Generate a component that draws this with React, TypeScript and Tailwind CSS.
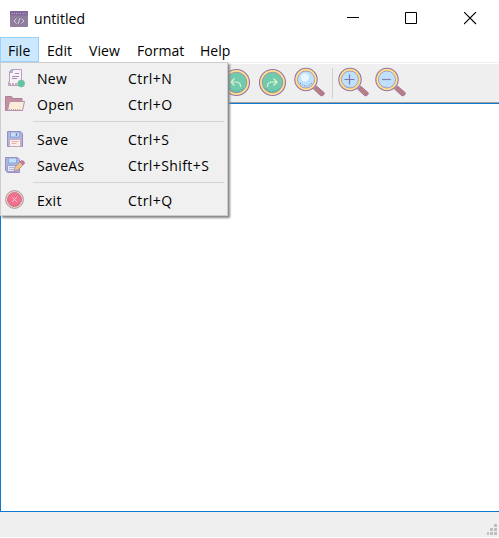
import React from 'react';

const ink = '#a58ac0';

function AppIcon() {
  return (
    <svg width="18" height="16" viewBox="0 0 18 16">
      <rect width="18" height="16" rx="1" fill="#8f7f9c" />
      <rect width="18" height="4.5" rx="1" fill="#83689c" />
      <path d="M2 2.500h9M13 2.500h3" stroke="#b9a2cc" strokeDasharray="1 1" />
      <path d="M6.500 7.500L4 10l2.500 2.500M11.500 7.500L14 10l-2.500 2.500M10 7l-2 6" fill="none" stroke="#d6cbdc" />
    </svg>
  );
}

function NewIcon() {
  return (
    <svg width="20" height="20" viewBox="0 0 20 20">
      <path d="M6.500 1.500H16.500V14a3 3 0 0 1-3 3.500H3.500V14H4.500V3.500z" fill="#f8f2f4" stroke="#b9a0c6" />
      <path d="M4.500 4.500h3v-3z" fill="#a9c4f0" stroke="#9c94cc" strokeWidth=".7" />
      <path d="M10 5.500h4M7 8.500h7M7 10.500h5" stroke={ink} strokeWidth="1.200" />
      <path d="M4 16h11" stroke="#c8a9b9" strokeDasharray="2 1" strokeWidth="2" />
      <circle cx="16.200" cy="15.500" r="3.500" fill="#5ac8a2" stroke="#8fb1ab" strokeWidth=".6" />
    </svg>
  );
}

function OpenIcon() {
  return (
    <svg width="20" height="20" viewBox="0 0 20 20">
      <path d="M.5 2.500h6l1.500 2h9v12H.5z" fill="#c58f9f" stroke="#ad819f" />
      <path d="M4.500 7.500h15l-2 9H2.500z" fill="#faecd9" stroke="#b392aa" />
      <path d="M4 15.500h12" stroke="#c7a4ac" strokeDasharray="1 1" />
    </svg>
  );
}

function SaveIcon() {
  return (
    <svg width="20" height="20" viewBox="0 0 20 20">
      <path d="M2.500 2.500h13l2 2v13h-15z" fill="#a7b7e3" stroke="#a18abf" />
      <path d="M5.500 3h9v5h-9z" fill="#c7def7" stroke="#8e9aca" strokeWidth=".8" />
      <path d="M11.500 4v3" stroke="#7d89bd" strokeWidth="1.500" />
      <path d="M4.500 10.500h11v7h-11z" fill="#fdeee5" stroke="#c6a2b8" strokeWidth=".8" />
      <path d="M6.500 12.500h7M6.500 14.500h5" stroke="#e4a9a4" strokeWidth=".9" />
    </svg>
  );
}

function SaveAsIcon() {
  return (
    <svg width="20" height="20" viewBox="0 0 20 20">
      <path d="M.5 2.500h12l2 2v13h-12l-2-2z" fill="#a7b7e3" stroke="#a18abf" />
      <path d="M3.500 3h8v5h-8z" fill="#bfe0f8" stroke="#8e9aca" strokeWidth=".8" />
      <path d="M2.500 10.500h10v6h-10z" fill="#e3eafc" stroke="#9b91bf" strokeWidth=".8" />
      <path d="M4 12.500h6M4 14.500h5" stroke="#a5a9cc" strokeWidth=".8" />
      <path d="M9 16l1-4 5-5 3 3-5 5z" fill="#edc28b" stroke="#a987a2" strokeWidth=".8" />
      <path d="M15 7l1.500-1.500q3 0 3 3L18 10z" fill="#d07b91" stroke="#a77597" strokeWidth=".8" />
    </svg>
  );
}

function ExitIcon() {
  return (
    <svg width="20" height="20" viewBox="0 0 20 20">
      <circle cx="9.500" cy="9.500" r="8.900" fill="#f2dba6" stroke="#a984b2" strokeWidth=".9" />
      <circle cx="9.500" cy="9.500" r="7" fill="#f26f8d" stroke="#b4759d" strokeWidth=".8" />
      <path d="M7 7l5 5M12 7l-5 5" stroke="#f8c3cf" />
      <path d="M6 14.500q3.500 2 7 0" fill="none" stroke="#c8638e" strokeDasharray="1 1" />
    </svg>
  );
}

function ArrowIcon({ redo = false }: { redo?: boolean }) {
  return (
    <svg width="30" height="30" viewBox="0 0 30 30">
      <circle cx="15.500" cy="14.500" r="13" fill="#ffe08c" stroke="#9474aa" strokeWidth="1.100" />
      <circle cx="15.500" cy="14.500" r="10.300" fill="#70cbae" stroke="#9888a5" strokeWidth=".8" />
      <path d="M8.500 20.500q7 6 14 0" fill="none" stroke="#4a9f99" strokeDasharray="1 1.500" strokeWidth="1.300" />
      <g transform={redo ? undefined : 'translate(30 0) scale(-1 1)'}>
        <path d="M10.500 19v-1q0-4 5-4h4M16.500 10.500l3.500 3.500-3.500 3.500" fill="none" stroke="#e2f0cf" strokeWidth="1.200" />
      </g>
    </svg>
  );
}

function LensIcon({ kind }: { kind: 'find' | 'plus' | 'minus' }) {
  return (
    <svg width="32" height="32" viewBox="0 0 32 32">
      <path d="M19.500 22l3-3 7.500 6.500q1 1-.5 2.500t-3 .5z" fill="#ba7d84" stroke="#96749c" strokeWidth=".9" />
      <circle cx="12" cy="12.500" r="11.200" fill="#ffe088" stroke="#9474aa" strokeWidth="1.100" />
      <circle cx="12" cy="12.500" r="8.500" fill="#bfe0fb" stroke="#a08cb4" strokeWidth=".8" />
      {kind === 'find' && <circle cx="11" cy="10.500" r="4" fill="#e9f6ff" />}
      {kind === 'find' && <path d="M6 16q6 6 12 0" fill="none" stroke="#7792cf" strokeDasharray="1 1.500" strokeWidth="1.300" />}
      {kind !== 'find' && <path d="M6 18q3 3 7 2" fill="none" stroke="#89a4d7" strokeDasharray="1 1" />}
      {kind === 'plus' && <path d="M6.500 12.500h10M11.500 7.500v10" stroke="#7c78ae" strokeWidth="1.200" />}
      {kind === 'minus' && <path d="M7 12.500h9" stroke="#8580b5" strokeWidth="1.200" />}
    </svg>
  );
}

function Item({ icon, label, keys }: { icon: React.ReactNode; label: string; keys: string }) {
  return (
    <div className="flex h-[26px] items-center pl-1">
      <div className="w-8 shrink-0 pb-[2px]">{icon}</div>
      <div className="w-[91px] shrink-0 tracking-[0.25px]">{label}</div>
      <div className="tracking-[0.42px]">{keys}</div>
    </div>
  );
}

function Separator() {
  return <div className="mt-[3px] mb-[5px] ml-8 mr-[3px] h-px bg-[#d4d4d4]" />;
}

export default function App() {
  return (
    <div className="relative flex h-[538px] w-[499px] flex-col overflow-hidden bg-white font-['Open_Sans','Noto_Sans',sans-serif] text-[14px] leading-5 tracking-[0.05px] whitespace-nowrap text-black">
      <header className="flex h-[37px] shrink-0 items-center pl-[10px]">
        <AppIcon />
        <h1 className="ml-[6px]">untitled</h1>
        <div className="ml-auto flex pr-[22px]">
          <svg className="mr-[45px]" width="13" height="13" viewBox="0 0 13 13"><path d="M0 5.500h12" stroke="#000" /></svg>
          <svg className="mr-[46px]" width="13" height="13" viewBox="0 0 13 13"><path d="M.5.500h11v11H.5z" fill="none" stroke="#000" /></svg>
          <svg width="13" height="13" viewBox="0 0 13 13"><path d="M0 0l12 12M12 0L0 12" stroke="#000" strokeWidth="1.100" /></svg>
        </div>
      </header>
      <nav className="flex h-[25px] shrink-0 items-center">
        <span className="flex h-full w-[39px] items-center border border-[#99d1ff] bg-[#cce8ff] pt-[2px] pl-[7px]">File</span>
        <span className="w-[42px] pt-[2px] pl-2">Edit</span>
        <span className="w-12 pt-[2px] pl-2">View</span>
        <span className="w-[63px] pt-[2px] pl-2">Format</span>
        <span className="pt-[2px] pl-2">Help</span>
      </nav>
      <div className="flex h-[41px] shrink-0 items-center border-t border-b border-t-[#f0f0f0] border-b-[#a0a0a0] bg-[#efefef] pl-[221px] shadow-[inset_0_1px_0_white]">
        <ArrowIcon />
        <div className="ml-[6px]"><ArrowIcon redo /></div>
        <div className="ml-[7px]"><LensIcon kind="find" /></div>
        <div className="ml-[6px] h-[30px] w-px bg-[#d0d0d0]" />
        <div className="ml-[5px]"><LensIcon kind="plus" /></div>
        <div className="ml-[5px]"><LensIcon kind="minus" /></div>
      </div>
      <main className="h-[409px] shrink-0 border-y border-l border-[#1078ce] bg-white" />
      <footer className="flex h-[25px] shrink-0 items-end justify-end bg-[#efefef] pr-[2px]">
        <svg width="10" height="13" viewBox="0 0 10 13" fill="#bfbfbf">
          <path d="M7 0h3v3H7zM3 4h3v3H3zM7 4h3v3H7zM0 8h2v3H0zM3 8h3v3H3zM7 8h3v3H7z" />
        </svg>
      </footer>
      <section className="absolute top-[62px] left-0 h-[154px] w-[228px] border border-[#ccc] bg-[#f0f0f0] pt-[3px] shadow-[2px_2px_2px_#888]">
        <Item icon={<NewIcon />} label="New" keys="Ctrl+N" />
        <Item icon={<OpenIcon />} label="Open" keys="Ctrl+O" />
        <Separator />
        <Item icon={<SaveIcon />} label="Save" keys="Ctrl+S" />
        <Item icon={<SaveAsIcon />} label="SaveAs" keys="Ctrl+Shift+S" />
        <Separator />
        <Item icon={<ExitIcon />} label="Exit" keys="Ctrl+Q" />
      </section>
    </div>
  );
}
